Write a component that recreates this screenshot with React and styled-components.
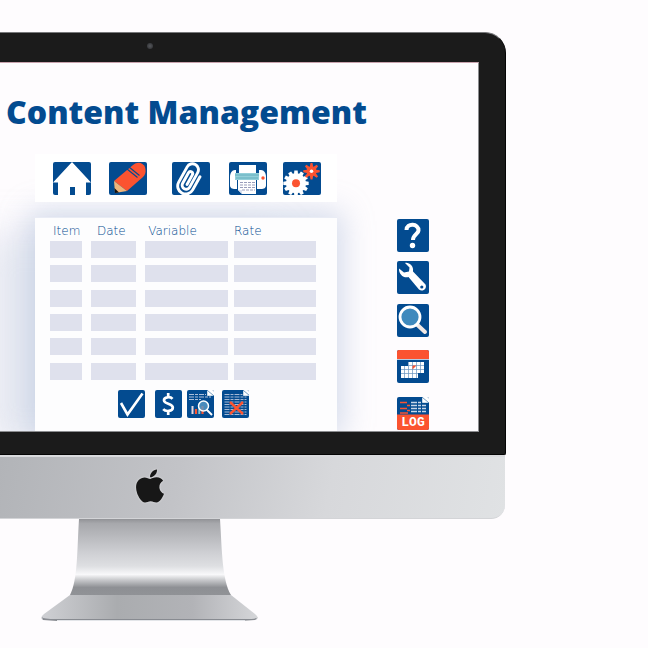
import React from "react";
import styled, { createGlobalStyle } from "styled-components";
import { FaApple } from "react-icons/fa";

const BLUE = "#034b90";
const ORANGE = "#fb5330";

const GlobalStyle = createGlobalStyle`
  *, *::before, *::after { box-sizing: border-box; }
  body { margin: 0; background: #fefcfe; font-family: "Open Sans", sans-serif; }
  h1, p { margin: 0; }
`;

const Page = styled.main`
  padding: 32px 142px 24px 0;
  overflow: hidden;
`;

const Bezel = styled.section`
  background: #1b1b1b;
  border-top: 1px solid #77787a;
  border-right: 1px solid #050505;
  border-bottom: 1px solid #050505;
  border-radius: 0 21px 2px 0;
  padding: 0 26px 22px 0;
`;

const Centerline = styled.div`
  display: flex;
  justify-content: center;
  align-items: center;
  width: 300px;
  height: ${(p) => p.$height};
`;

const Camera = styled.span`
  width: 6px;
  height: 6px;
  margin-bottom: 4px;
  border-radius: 50%;
  background: radial-gradient(#55575b, #2c2d30);
`;

const Screen = styled.div`
  background: #fefcfe;
  border-top: 1px solid #c9a3ae;
  border-right: 1px solid #8c8d90;
  border-bottom: 1px solid #8c8d90;
  overflow: hidden;
`;

const Title = styled.h1`
  padding: 29px 0 22px 6px;
  color: ${BLUE};
  font-family: "Open Sans", sans-serif;
  font-size: 32px;
  font-weight: 800;
  line-height: 40px;
  white-space: nowrap;
`;

const Workspace = styled.div`
  display: grid;
  grid-template-columns: minmax(302px, 302fr) minmax(142px, 142fr);
  padding-left: 35px;
`;

const Column = styled.div`
  display: flex;
  flex-direction: column;
  gap: 15px;
`;

const Toolbar = styled.nav`
  display: flex;
  padding: 8px 16px 7px 18px;
  background: #fff;
  z-index: 1;
`;

const Rail = styled.nav`
  display: flex;
  flex-direction: column;
  align-items: flex-start;
  padding: 65px 0 0 60px;
  z-index: 1;
`;

const Sheet = styled.section`
  flex: 1;
  padding: 6px 21px 13px 15px;
  background: #fdfdfe;
  border-top: 1px solid #e9ecf5;
  box-shadow: 0 0 28px 6px rgba(150, 172, 208, 0.4), -60px 16px 36px 0 rgba(196, 202, 224, 0.35);
`;

const IconButton = styled.button`
  display: block;
  flex: none;
  width: ${(p) => p.$width}px;
  height: ${(p) => p.$height}px;
  margin: ${(p) => (p.$down ? `${p.$gap}px 0 0` : `0 0 0 ${p.$gap}px`)};
  padding: 0;
  border: 0;
  border-radius: 2px;
  background: ${BLUE};
  overflow: hidden;
  cursor: pointer;

  svg { display: block; width: 100%; height: 100%; }
`;

const Table = styled.table`
  width: 100%;
  height: 163px;
  table-layout: fixed;
  border-collapse: collapse;
`;

const Heading = styled.th`
  height: 17px;
  padding: 0 0 0 3px;
  color: ${BLUE};
  font-family: "DejaVu Sans", sans-serif;
  font-size: 12px;
  font-weight: 200;
  line-height: 15px;
  text-align: left;
  vertical-align: top;
  white-space: nowrap;

  &:nth-child(2) { padding-left: 6px; }
  &:last-child { padding-left: 0; }
`;

const Cell = styled.td`
  padding: 0 9px 7px 0;
  vertical-align: top;

  &:nth-child(3) { padding-right: 6px; }
  &:last-child { padding-right: 0; }
`;

const Slot = styled.div`
  height: 17px;
  background: #dfe1ed;
`;

const Col = styled.col`
  width: ${(p) => p.$width};
`;

const Actions = styled.div`
  display: flex;
  padding: 3px 0 0 68px;
`;

const Chin = styled.div`
  margin-right: 1px;
  border-top: 2px solid #d9dadd;
  border-bottom: 1px solid #d3d4d7;
  border-radius: 0 0 14px 0;
  background: linear-gradient(100deg, #b2b4b8 0%, #c2c3c7 35%, #d7d8db 65%, #e0e2e4 100%);
`;

const Logo = styled(FaApple)`
  width: 38px;
  height: 38px;
  margin-bottom: 4px;
  color: #171717;
  filter: drop-shadow(0 0 1px #e5e5e7);
`;

const StandArt = styled.svg`
  display: block;
  flex: none;
  width: 218px;
  height: 103px;
`;

function gearPoints(cx, cy, outer, inner, teeth, tip) {
  const points = [];
  const step = (Math.PI * 2) / teeth;
  for (let i = 0; i < teeth; i += 1) {
    const a = i * step;
    [[-0.5 + tip / 4, inner], [-tip / 2, outer], [tip / 2, outer], [0.5 - tip / 4, inner]].forEach(([k, r]) => {
      points.push(`${(cx + Math.cos(a + k * step) * r).toFixed(2)},${(cy + Math.sin(a + k * step) * r).toFixed(2)}`);
    });
  }
  return points.join(" ");
}

const HomeIcon = () => (
  <svg viewBox="0 0 38 33" aria-hidden="true">
    <path d="M19 0 38 20.5H33V33H5V20.5H0Z" fill="#fff" />
    <path d="M17 25h5v8h-5z" fill={BLUE} />
  </svg>
);

const PencilIcon = () => (
  <svg viewBox="0 0 38 33" aria-hidden="true">
    <path d="M5 19 24 3C29-1 34 1 36 5c1 4 1 7-2 10L18 29Z" fill={ORANGE} />
    <path d="M5 19 18 29 6 31Z" fill="#efb57b" />
    <path d="M5.400 26 10 30.500 6 31Z" fill="#111" />
    <path d="M20 5 30.500 13.500M18 7 28.500 15.500" stroke={BLUE} strokeWidth="1.100" />
  </svg>
);

const ClipIcon = () => (
  <svg viewBox="0 0 38 33" aria-hidden="true">
    <path
      d="M25.500 8V23a8 8 0 0 1-16 0V5.500a6 6 0 0 1 12 0V22a4 4 0 0 1-8 0V10a2.200 2.200 0 0 1 4.400 0V21"
      transform="rotate(29 17 15) translate(1 1.500)"
      fill="none" stroke="#fff" strokeWidth="2.900" strokeLinecap="round"
    />
  </svg>
);

const PrinterIcon = () => (
  <svg viewBox="0 0 38 33" aria-hidden="true">
    <path d="M1 15c0-4 2-7 5-7h26c3 0 5 3 5 7v8c0 3-2 4-5 4H6c-3 0-5-1-5-4Z" fill="#fff" />
    <path d="M7 7h3v4H7zM27 7h3v4h-3z" fill={BLUE} />
    <path d="M10 3h17v9H10z" fill="#fff" />
    <path d="M6 11h24v7H6z" fill="#93cfd9" />
    <path d="M6 13h24M7 16h22" stroke="#62aebd" />
    <path d="M9 18h18v14H13l-4-4Z" fill="#fff" />
    <path d="M8.500 18v14h4M27.500 18v14" stroke={BLUE} fill="none" />
    <path d="M11 20.500h15M11 23h15M11 25.500h15M13 28h13" stroke="#9a9dbb" strokeDasharray="3 1" />
    <path d="m9 28 4 4v-4Z" fill="#d9e0ef" />
    <circle cx="34" cy="16" r="1.700" fill={ORANGE} />
  </svg>
);

const GearsIcon = () => (
  <svg viewBox="0 0 38 33" aria-hidden="true">
    <polygon points={gearPoints(13, 21.3, 12.8, 10, 12, 0.5)} fill="#fff" />
    <circle cx="13" cy="21.300" r="4" fill={ORANGE} />
    <polygon points={gearPoints(28.5, 9.3, 8.3, 5, 8, 0.3)} fill={ORANGE} />
    <circle cx="28.500" cy="9.300" r="1.800" fill="#fff" />
  </svg>
);

const HelpIcon = () => (
  <svg viewBox="0 0 32 33" aria-hidden="true">
    <path d="M9.500 11C9.500 3.500 22 4.500 21.500 11.500c-.3 4-5.500 4-5.500 9.500" fill="none" stroke="#fff" strokeWidth="4" />
    <circle cx="15.500" cy="26.500" r="2.700" fill="#fff" />
  </svg>
);

const WrenchIcon = () => (
  <svg viewBox="0 0 32 32" aria-hidden="true">
    <path d="M8 1.500c4-1 9 3 8 8.500L28.500 23c2 4-3 8-6.500 5L11.500 15.500C7 17 1.500 13 2 7l5 4 5-1 .5-4Z" fill="#fff" />
    <circle cx="24.800" cy="25.500" r="1.600" fill={BLUE} />
  </svg>
);

const SearchIcon = () => (
  <svg viewBox="0 0 32 32" aria-hidden="true">
    <path d="m20 20 8 7.500" stroke="#f2e9e5" strokeWidth="4" strokeLinecap="round" />
    <circle cx="13" cy="12.500" r="10" fill="#3f8abd" stroke="#fff" strokeWidth="2.800" />
  </svg>
);

const CalendarIcon = () => (
  <svg viewBox="0 0 32 33" aria-hidden="true">
    <path d="M0 0h32v9H0z" fill={ORANGE} />
    <path d="M0 9.500h32" stroke="#b5cbe0" />
    <path d="M11 12h16v11h-6v5H4V16h7z" fill="#fff" />
    <path d="M11.500 12v16M15.500 12v16M19.500 12v16M23.500 12v11M7.500 16v12M11 15.500h16M4 19.500h23M4 23.500h17" stroke="#6794bf" strokeWidth=".7" />
    <path d="M15.500 15.500h4l-4 4z" fill={ORANGE} />
  </svg>
);

const Fold = ({ x }) => (
  <>
    <path d={`M${x} 0h7v6Z`} fill="#fff" />
    <path d={`M${x} 0v6h7Z`} fill="#fff" stroke={BLUE} strokeWidth=".4" />
  </>
);

const LogIcon = () => (
  <svg viewBox="0 0 32 33" aria-hidden="true">
    <Fold x={25} />
    <path d="M3 5.500h7M10 8.500h3M3 11.500h7M10 13.500h3M3 16h8" stroke={ORANGE} strokeWidth="1.500" />
    <path d="M14 5.500h10M14 8.500h15M14 11.500h15M14 14.500h15" stroke="#c7d6e8" strokeWidth="1.300" strokeDasharray="6 1 3 1" />
    <path d="M0 17.500h32V33H0z" fill={ORANGE} />
    <text x="16" y="29" textAnchor="middle" fill="#fff" fontFamily="Liberation Mono, monospace" fontWeight="700" fontSize="13">LOG</text>
  </svg>
);

const CheckIcon = () => (
  <svg viewBox="0 0 27 28" aria-hidden="true">
    <path d="M3 13 9.500 24.500 24.500 3.500" fill="none" stroke="#fff" strokeWidth="2.600" />
  </svg>
);

const DollarIcon = () => (
  <svg viewBox="0 0 27 28" aria-hidden="true">
    <path d="M17.500 8.800C15.500 6.500 8.800 6.500 9 10.500c.2 4 8.800 2.500 8.800 7 0 4.300-7.300 4.300-9.600 1.700M13.200 3v4M13.200 21v4" fill="none" stroke="#fff" strokeWidth="2.700" />
  </svg>
);

const ReportIcon = () => (
  <svg viewBox="0 0 27 28" aria-hidden="true">
    <Fold x={20} />
    <path d="M2 4.500h17M2 7h22M2 9.500h12" stroke="#adc0da" strokeWidth="1.100" strokeDasharray="5 1 3 1" />
    <path d="M5.500 16v8" stroke="#e7d8de" strokeWidth="2" />
    <path d="M9 19v5M15.500 16v8" stroke={ORANGE} strokeWidth="2.200" />
    <path d="M12.300 17v7" stroke="#81c6d3" strokeWidth="2" />
    <path d="m19.500 19.500 5.500 5.500" stroke="#fff" strokeWidth="2" />
    <circle cx="16.500" cy="16" r="5" fill="#5b9bc7" fillOpacity=".8" stroke="#fff" strokeWidth="1.500" />
  </svg>
);

const DeleteIcon = () => (
  <svg viewBox="0 0 27 28" aria-hidden="true">
    <Fold x={21} />
    <path d="M2.500 4.500h18M2.500 7h22M2.500 9.500h22M2.500 12h22M2.500 14.500h22M2.500 17h22M2.500 19.500h22M2.500 22h22M2.500 24.500h22" stroke="#a5b9d5" strokeWidth="1" strokeDasharray="5 1 3 1" />
    <path d="M8 12 21 24M21 12 8 24" stroke={ORANGE} strokeWidth="2.400" />
  </svg>
);

const Stand = () => (
  <StandArt viewBox="0 0 218 103" aria-hidden="true">
    <defs>
      <linearGradient id="neck" x1="0" y1="0" x2="0" y2="1">
        <stop offset="0" stopColor="#929397" />
        <stop offset=".06" stopColor="#a7a8ac" />
        <stop offset=".45" stopColor="#cfd0d4" />
        <stop offset=".62" stopColor="#dedfe2" />
        <stop offset=".73" stopColor="#f8f8fa" />
        <stop offset=".8" stopColor="#c9cacd" />
        <stop offset=".9" stopColor="#8e9094" />
        <stop offset="1" stopColor="#909296" />
      </linearGradient>
      <linearGradient id="foot">
        <stop offset="0" stopColor="#cfd0d4" />
        <stop offset=".35" stopColor="#aaacaf" />
        <stop offset=".7" stopColor="#b2b3b7" />
        <stop offset="1" stopColor="#d5d6d9" />
      </linearGradient>
    </defs>
    <path d="M29 76 3 95q-5 4-1 6h213q4-2-1-6L190 76Z" fill="url(#foot)" />
    <path d="M38 0H179C181 30 181 61 190 76H29C37 61 36 30 38 0Z" fill="url(#neck)" />
    <path d="M1 98q1 2 14 2h189q12 0 13-2l-3 3-15 1H16L2 101Z" fill="#888b91" />
    <path d="M16 101.500H204" stroke="#e3e5e9" />
  </StandArt>
);

const tools = [
  ["Home", HomeIcon, 0],
  ["Edit", PencilIcon, 18],
  ["Attach", ClipIcon, 25],
  ["Print", PrinterIcon, 19],
  ["Settings", GearsIcon, 16],
];

const utilities = [
  ["Help", HelpIcon, 0],
  ["Maintenance", WrenchIcon, 9],
  ["Search", SearchIcon, 10],
  ["Calendar", CalendarIcon, 13],
  ["Log", LogIcon, 14],
];

const actions = [
  ["Approve", CheckIcon, 0],
  ["Cost", DollarIcon, 10],
  ["Report", ReportIcon, 5],
  ["Delete", DeleteIcon, 8],
];

const columns = [
  ["Item", "15.4%"],
  ["Date", "20.4%"],
  ["Variable", "33.4%"],
  ["Rate", "30.8%"],
];

const rows = [1, 2, 3, 4, 5, 6];

const IconSet = ({ items, width, height, down }) =>
  items.map(([label, Icon, gap]) => (
    <IconButton key={label} type="button" aria-label={label} $width={width} $height={height} $gap={gap} $down={down}>
      <Icon />
    </IconButton>
  ));

export default function App() {
  return (
    <>
      <GlobalStyle />
      <Page>
        <Bezel>
          <Centerline $height="29px"><Camera /></Centerline>
          <Screen>
            <Title>Content Management</Title>
            <Workspace>
              <Column>
                <Toolbar aria-label="Tools">
                  <IconSet items={tools} width={38} height={33} />
                </Toolbar>
                <Sheet>
                  <Table>
                    <colgroup>
                      {columns.map(([name, width]) => <Col key={name} $width={width} />)}
                    </colgroup>
                    <thead>
                      <tr>{columns.map(([name]) => <Heading key={name} scope="col">{name}</Heading>)}</tr>
                    </thead>
                    <tbody>
                      {rows.map((row) => (
                        <tr key={row}>
                          {columns.map(([name]) => <Cell key={name}><Slot /></Cell>)}
                        </tr>
                      ))}
                    </tbody>
                  </Table>
                  <Actions>
                    <IconSet items={actions} width={27} height={28} />
                  </Actions>
                </Sheet>
              </Column>
              <Rail aria-label="Utilities">
                <IconSet items={utilities} width={32} height={33} down />
              </Rail>
            </Workspace>
          </Screen>
        </Bezel>
        <Chin>
          <Centerline $height="61px"><Logo aria-label="Apple" /></Centerline>
        </Chin>
        <Centerline $height="103px"><Stand /></Centerline>
      </Page>
    </>
  );
}
